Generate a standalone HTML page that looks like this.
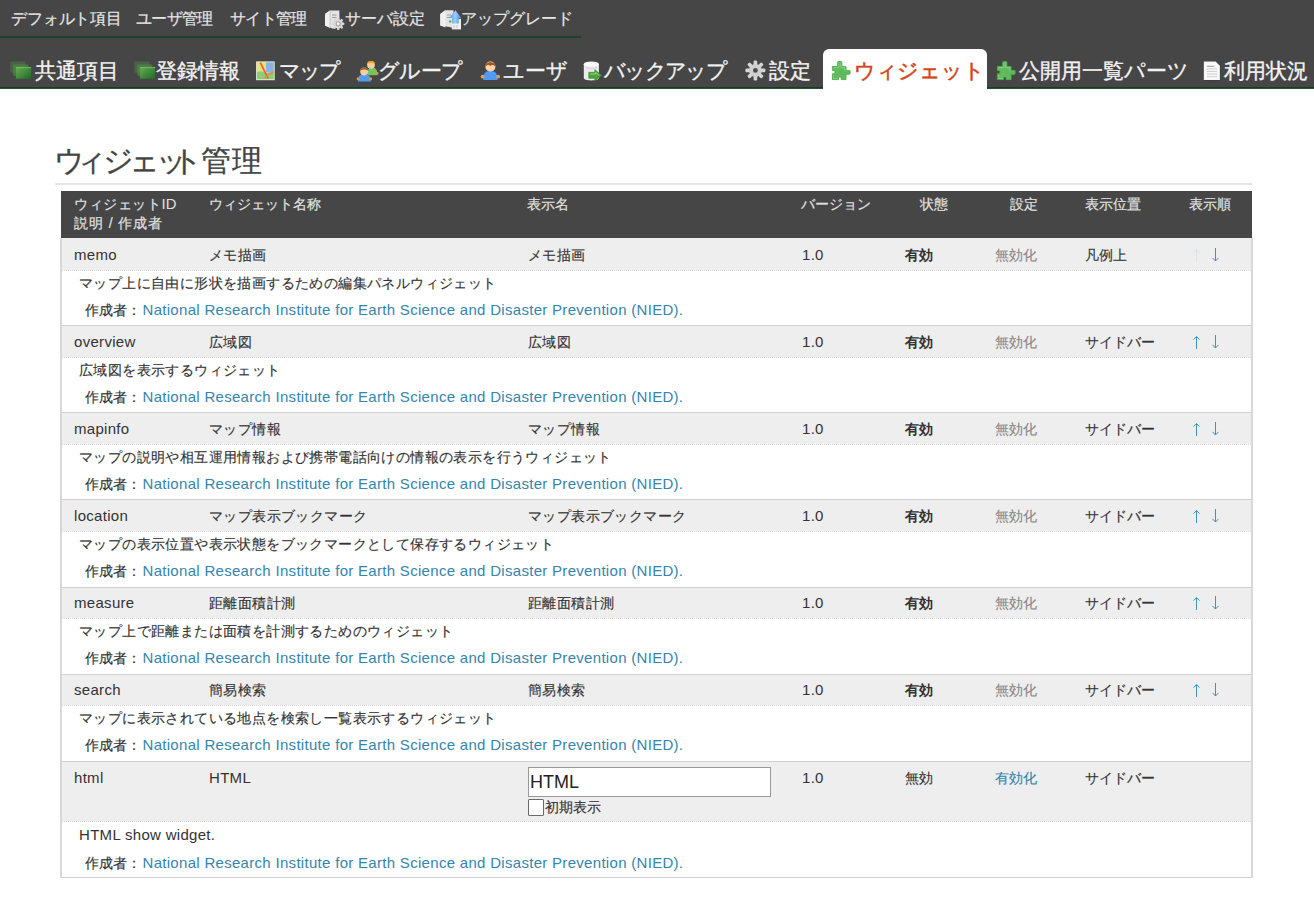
<!DOCTYPE html>
<html><head><meta charset="utf-8"><style>
*{margin:0;padding:0;box-sizing:border-box}
html,body{width:1314px;height:909px;overflow:hidden;background:#fff}
body{position:relative;font-family:"Liberation Sans",sans-serif;color:#333}
.a{position:absolute;white-space:nowrap;line-height:1}
#hdr{position:absolute;left:0;top:0;width:1314px;height:89px;background:#464646}
#hdr .ln1{position:absolute;left:0;top:36px;width:581px;height:2px;background:#1e4232}
#hdr .ln2{position:absolute;left:0;top:87px;width:1314px;height:2px;background:linear-gradient(#15301f,#2c5a3c)}
.nav1{font-size:15.6px;color:#e6e6e6;-webkit-text-stroke:.2px currentColor}
.nav2{font-size:20.8px;color:#f2f2f2;-webkit-text-stroke:.35px currentColor}
.tabact{position:absolute;left:823px;top:49px;width:164px;height:40px;background:#fff;border-radius:6px 6px 0 0}
.ic{position:absolute}
.title{font-size:30px;color:#444;-webkit-text-stroke:.3px currentColor}
.rule{position:absolute;left:55px;top:183px;width:1197px;height:2px;background:#e4e4e4}
.th{position:absolute;left:61px;top:191px;width:1191px;height:47px;background:#464646}
.hd{font-size:14.3px;color:#e0e0e0;-webkit-text-stroke:.2px currentColor}
.gr{position:absolute;left:61px;width:1191px;background:#eee}
.wh{position:absolute;left:61px;width:1191px;background:#fff}
.dot{position:absolute;left:62px;width:1189px;height:1px;border-top:1px dotted #d8d8d8}
.sep{position:absolute;left:61px;width:1191px;height:1px;background:#d0d0d0}
.vb{position:absolute;width:2px;background:#d8d8d8}
.td{font-size:14.3px;color:#333;-webkit-text-stroke:.15px currentColor}
.lk{color:#3585ad}
.dis{color:#888}
.b{font-weight:bold;-webkit-text-stroke:0}
.en{font-size:15px;letter-spacing:.3px;-webkit-text-stroke:0}
.ks{letter-spacing:.4px}
</style></head><body>
<div id="hdr"><div class="ln1"></div><div class="ln2"></div><div class="tabact"></div></div>

<div class="a nav1" style="left:11px;top:11px;letter-spacing:-0.15px">デフォルト項目</div>
<div class="a nav1" style="left:136px;top:11px;letter-spacing:-0.7px">ユーザ管理</div>
<div class="a nav1" style="left:230px;top:11px;letter-spacing:-0.7px">サイト管理</div>
<div class="a nav1" style="left:345px;top:11px;letter-spacing:0px">サーバ設定</div>
<div class="a nav1" style="left:461px;top:11px;letter-spacing:0px">アップグレード</div>
<div class="ic" style="left:320px;top:3px"><svg width="30" height="30" viewBox="0 0 30 30"><path d="M5 11 L10 7.4 H19.4 V24.5 L13 25.7 L5 22.6z" fill="#e4e4e4"/><path d="M5 11 L10 7.4 V25 L5 22.6z" fill="#f0f0f0"/><path d="M10 7.4 V25" stroke="#bdbdbd" stroke-width=".8"/><path d="M12 12 H16.5 M12 14.5 H16.5" stroke="#9e9e9e" stroke-width="1.2"/><rect x="17" y="14.6" width="2.4" height="3.2" rx=".8" fill="#d8d8d8" transform="rotate(0 18.2 20.8)"/><rect x="17" y="14.6" width="2.4" height="3.2" rx=".8" fill="#d8d8d8" transform="rotate(45 18.2 20.8)"/><rect x="17" y="14.6" width="2.4" height="3.2" rx=".8" fill="#d8d8d8" transform="rotate(90 18.2 20.8)"/><rect x="17" y="14.6" width="2.4" height="3.2" rx=".8" fill="#d8d8d8" transform="rotate(135 18.2 20.8)"/><rect x="17" y="14.6" width="2.4" height="3.2" rx=".8" fill="#d8d8d8" transform="rotate(180 18.2 20.8)"/><rect x="17" y="14.6" width="2.4" height="3.2" rx=".8" fill="#d8d8d8" transform="rotate(225 18.2 20.8)"/><rect x="17" y="14.6" width="2.4" height="3.2" rx=".8" fill="#d8d8d8" transform="rotate(270 18.2 20.8)"/><rect x="17" y="14.6" width="2.4" height="3.2" rx=".8" fill="#d8d8d8" transform="rotate(315 18.2 20.8)"/><circle cx="18.2" cy="20.8" r="4.6" fill="#d8d8d8"/><circle cx="18.2" cy="20.8" r="2.6" fill="#a8a8a8"/><circle cx="18.2" cy="20.8" r="1.3" fill="#fff"/></svg></div>
<div class="ic" style="left:435px;top:3px"><svg width="30" height="30" viewBox="0 0 30 30"><defs><linearGradient id="gU" x1="0" y1="0" x2="1" y2="0"><stop offset="0" stop-color="#4a9ae8"/><stop offset=".5" stop-color="#9fcdf8"/><stop offset="1" stop-color="#3a86e0"/></linearGradient></defs><path d="M5.3 11 L10.3 7.3 H18.5 V24.8 L5.3 22.6z" fill="#e4e4e4"/><path d="M5.3 11 L10.3 7.3 V24.5 L5.3 22.6z" fill="#f0f0f0"/><path d="M12 12 H16 M12 14.5 H16" stroke="#9e9e9e" stroke-width="1.2"/><circle cx="15.2" cy="18.5" r="1.2" fill="#50b050"/><rect x="16.8" y="15.8" width="9.2" height="10.6" fill="#eeeeee"/><path d="M19 22 V25 M22 22 V25" stroke="#bbb" stroke-width=".8"/><path d="M20.5 7.3 L26.4 14.9 H23.8 V20.5 H17 V14.9 H14.2z" fill="url(#gU)"/></svg></div>
<div class="ic" style="left:5px;top:55px"><svg width="35" height="30" viewBox="0 0 35 30"><defs><linearGradient id="gF" x1="0" y1="0" x2="1" y2="1"><stop offset="0" stop-color="#68ad58"/><stop offset="1" stop-color="#1f6a22"/></linearGradient></defs><rect x="5.3" y="6.6" width="15.2" height="11.2" rx="1" fill="#4f7a48" opacity=".55"/><rect x="8.1" y="9.4" width="15.3" height="11.4" rx="1" fill="#4c8a44" opacity=".75"/><rect x="10.9" y="12" width="15.2" height="11.8" rx=".8" fill="url(#gF)"/><rect x="10.9" y="12" width="15.2" height="1" fill="#7cc06a" opacity=".7"/></svg></div>
<div class="a nav2" style="left:35px;top:61px;letter-spacing:0px;">共通項目</div>
<div class="ic" style="left:129px;top:55px"><svg width="35" height="30" viewBox="0 0 35 30"><defs><linearGradient id="gF" x1="0" y1="0" x2="1" y2="1"><stop offset="0" stop-color="#68ad58"/><stop offset="1" stop-color="#1f6a22"/></linearGradient></defs><rect x="5.3" y="6.6" width="15.2" height="11.2" rx="1" fill="#4f7a48" opacity=".55"/><rect x="8.1" y="9.4" width="15.3" height="11.4" rx="1" fill="#4c8a44" opacity=".75"/><rect x="10.9" y="12" width="15.2" height="11.8" rx=".8" fill="url(#gF)"/><rect x="10.9" y="12" width="15.2" height="1" fill="#7cc06a" opacity=".7"/></svg></div>
<div class="a nav2" style="left:156px;top:61px;letter-spacing:0px;">登録情報</div>
<div class="ic" style="left:250px;top:55px"><svg width="35" height="30" viewBox="0 0 35 30"><rect x="6.1" y="6.4" width="18.6" height="18.8" fill="#e4eed8"/><rect x="7" y="7.3" width="9.5" height="11" fill="#ece27a"/><rect x="16" y="7.3" width="7.8" height="10" fill="#8cb2e8"/><path d="M7 17 Q12 15 16 18 L23.8 16.5 V24.3 H7z" fill="#8ccf78"/><path d="M10.3 7.6 L18.2 23.6" stroke="#e8603e" stroke-width="1.8"/><path d="M17 20.5 L23.5 17 M17 20.5 L14 23.8" stroke="#ef8a48" stroke-width="1.5"/></svg></div>
<div class="a nav2" style="left:279px;top:61px;letter-spacing:-2px;">マップ</div>
<div class="ic" style="left:352px;top:55px"><svg width="35" height="30" viewBox="0 0 35 30"><path d="M15.5 20.2 C15.5 14 17 12.5 20 12.5 C23 12.5 25.5 14 25.5 20.2z" fill="#74c462"/><circle cx="25.2" cy="18.2" r="1.3" fill="#e39646"/><circle cx="19" cy="9.8" r="3.9" fill="#f6cfa0"/><path d="M15 9.3 C15 5 23 5 23 9.3 C21 7.4 17 7.4 15 9.3z" fill="#eea41e"/><path d="M6 26.4 C6 20.5 8 19.6 12.3 19.6 C16.6 19.6 18.8 20.5 18.8 26.4z" fill="#4e9cf0"/><circle cx="6.1" cy="23.8" r="1.5" fill="#e39646"/><circle cx="18.6" cy="23.8" r="1.5" fill="#e39646"/><circle cx="12.2" cy="16.4" r="4" fill="#f6cfa0"/><path d="M8 16 C7.6 11.2 16.8 11.2 16.4 16 C14.5 14 10 14 8 16z" fill="#9c5a32"/></svg></div>
<div class="a nav2" style="left:378px;top:61px;letter-spacing:-0.7px;">グループ</div>
<div class="ic" style="left:475px;top:55px"><svg width="35" height="30" viewBox="0 0 35 30"><path d="M8.2 25 C8.2 17.5 10.5 15.6 15.4 15.6 C20.3 15.6 22.6 17.5 22.6 25z" fill="#4f9cf2"/><path d="M8.5 20 C9.5 17 11 16 15.4 16 C19.8 16 21.3 17 22.3 20" stroke="#2356b8" stroke-width="1" fill="none"/><circle cx="7.6" cy="21.6" r="1.9" fill="#e8a050"/><circle cx="23.2" cy="21.6" r="1.9" fill="#e8a050"/><circle cx="15.4" cy="11.6" r="5.1" fill="#f8d6aa"/><path d="M10.2 12 C9.5 5.5 21.3 5.5 20.6 12 C19 9.6 16.5 9.4 15.4 11 C14 9.4 12 9.6 10.2 12z" fill="#a4541c"/></svg></div>
<div class="a nav2" style="left:503px;top:61px;letter-spacing:0px;">ユーザ</div>
<div class="ic" style="left:578px;top:55px"><svg width="35" height="30" viewBox="0 0 35 30"><path d="M5.8 9.2 V23 C5.8 24.6 9 25.4 13.35 25.4 C17.7 25.4 20.9 24.6 20.9 23 V9.2z" fill="#ececec"/><ellipse cx="13.35" cy="9.2" rx="7.6" ry="2.6" fill="#fafafa"/><path d="M8 12.5 C10 13.6 17 13.6 19 12.5" stroke="#cfcfcf" stroke-width="1" fill="none"/><path d="M10.8 17.3 H16.8 V14.6 L23.6 20.3 L16.8 25.9 V23.3 H10.8z" fill="#4aa43a" stroke="#2f8a22" stroke-width=".6" stroke-linejoin="round"/><path d="M12 19 H17.5 V17.4 L21.2 20.3" stroke="#9ad08a" stroke-width="1" fill="none"/></svg></div>
<div class="a nav2" style="left:604px;top:61px;letter-spacing:-1.7px;">バックアップ</div>
<div class="ic" style="left:740px;top:55px"><svg width="35" height="30" viewBox="0 0 35 30"><rect x="13.6" y="5.4" width="3.6" height="5" rx="1.2" fill="#d6d6d6" transform="rotate(0 15.4 15.4)"/><rect x="13.6" y="5.4" width="3.6" height="5" rx="1.2" fill="#d6d6d6" transform="rotate(45 15.4 15.4)"/><rect x="13.6" y="5.4" width="3.6" height="5" rx="1.2" fill="#d6d6d6" transform="rotate(90 15.4 15.4)"/><rect x="13.6" y="5.4" width="3.6" height="5" rx="1.2" fill="#d6d6d6" transform="rotate(135 15.4 15.4)"/><rect x="13.6" y="5.4" width="3.6" height="5" rx="1.2" fill="#d6d6d6" transform="rotate(180 15.4 15.4)"/><rect x="13.6" y="5.4" width="3.6" height="5" rx="1.2" fill="#d6d6d6" transform="rotate(225 15.4 15.4)"/><rect x="13.6" y="5.4" width="3.6" height="5" rx="1.2" fill="#d6d6d6" transform="rotate(270 15.4 15.4)"/><rect x="13.6" y="5.4" width="3.6" height="5" rx="1.2" fill="#d6d6d6" transform="rotate(315 15.4 15.4)"/><circle cx="15.4" cy="15.4" r="6.4" fill="#d0d0d0"/><circle cx="15.4" cy="15.4" r="2.4" fill="#4a4a4a"/></svg></div>
<div class="a nav2" style="left:769px;top:61px;letter-spacing:0px;">設定</div>
<div class="ic" style="left:826px;top:55px"><svg width="35" height="30" viewBox="0 0 35 30"><defs><radialGradient id="gP" cx=".5" cy=".6" r=".6"><stop offset="0" stop-color="#5cb95a"/><stop offset=".7" stop-color="#62bd60"/><stop offset="1" stop-color="#49a848"/></radialGradient></defs><path d="M6.4 11.5 H11.7 V7.3 Q11.7 6.6 12.4 6.6 H15.2 Q15.9 6.6 15.9 7.3 V11.5 H20 V15.4 H23.4 Q24.1 15.4 24.1 16.1 V18.6 Q24.1 19.3 23.4 19.3 H20 V24.6 H15.2 V22.1 H12.5 V24.6 H6.4 V18.8 H8.9 V15.5 H6.4 Z" fill="url(#gP)" stroke="#4fae4d" stroke-width=".9" stroke-linejoin="round"/><path d="M7.6 12.6 H12.8 V7.8 H14.8 V12.6 H18.9 V16.4 M7.6 12.6 V14.4 M7.6 19.9 V23.5 H11.4" stroke="#94d48e" stroke-width=".9" fill="none" opacity=".8"/></svg></div>
<div class="a nav2" style="left:854px;top:61px;letter-spacing:-0.3px;color:#d4441a;-webkit-text-stroke:.5px #d4441a">ウィジェット</div>
<div class="ic" style="left:991px;top:55px"><svg width="35" height="30" viewBox="0 0 35 30"><defs><radialGradient id="gP" cx=".5" cy=".6" r=".6"><stop offset="0" stop-color="#5cb95a"/><stop offset=".7" stop-color="#62bd60"/><stop offset="1" stop-color="#49a848"/></radialGradient></defs><path d="M6.4 11.5 H11.7 V7.3 Q11.7 6.6 12.4 6.6 H15.2 Q15.9 6.6 15.9 7.3 V11.5 H20 V15.4 H23.4 Q24.1 15.4 24.1 16.1 V18.6 Q24.1 19.3 23.4 19.3 H20 V24.6 H15.2 V22.1 H12.5 V24.6 H6.4 V18.8 H8.9 V15.5 H6.4 Z" fill="url(#gP)" stroke="#4fae4d" stroke-width=".9" stroke-linejoin="round"/><path d="M7.6 12.6 H12.8 V7.8 H14.8 V12.6 H18.9 V16.4 M7.6 12.6 V14.4 M7.6 19.9 V23.5 H11.4" stroke="#94d48e" stroke-width=".9" fill="none" opacity=".8"/></svg></div>
<div class="a nav2" style="left:1019px;top:61px;letter-spacing:0px;">公開用一覧パーツ</div>
<div class="ic" style="left:1198px;top:55px"><svg width="35" height="30" viewBox="0 0 35 30"><path d="M5.3 5.9 H17.8 L22.4 10.5 V25.6 H5.3z" fill="#2e2e2e" opacity=".6"/><path d="M5.8 6.4 H17.6 L21.9 10.8 V25.1 H5.8z" fill="#f8f8f8"/><path d="M9 11.3 H16.2" stroke="#9a9a9a" stroke-width="1"/><path d="M9 13.9 H19 M9 16.5 H19 M9 19.1 H19 M9 21.7 H19" stroke="#cfcfcf" stroke-width="1"/></svg></div>
<div class="a nav2" style="left:1224px;top:61px;letter-spacing:0px;">利用状況</div>
<div class="a title" style="left:54px;top:146px">ウ</div>
<div class="a title" style="left:76px;top:146px">ィ</div>
<div class="a title" style="left:103px;top:146px">ジ</div>
<div class="a title" style="left:129px;top:146px">ェ</div>
<div class="a title" style="left:156px;top:146px">ッ</div>
<div class="a title" style="left:172px;top:146px">ト</div>
<div class="a title" style="left:201px;top:146px">管</div>
<div class="a title" style="left:232px;top:146px">理</div>
<div class="rule"></div><div class="th"></div>
<div class="a hd" style="left:74px;top:197px"><span style='letter-spacing:.6px'>ウィジェット</span><span class=en style='font-size:14.8px;letter-spacing:0'>ID</span></div>
<div class="a hd" style="left:209px;top:197px">ウィジェット名称</div>
<div class="a hd" style="left:527px;top:197px">表示名</div>
<div class="a hd" style="left:801px;top:197px">バージョン</div>
<div class="a hd" style="left:920px;top:197px">状態</div>
<div class="a hd" style="left:1010px;top:197px">設定</div>
<div class="a hd" style="left:1085px;top:197px">表示位置</div>
<div class="a hd" style="left:1189px;top:197px">表示順</div>
<div class="a hd" style="left:74px;top:216px;letter-spacing:.9px">説明 / 作成者</div>
<div class="gr" style="top:238px;height:32px"></div>
<div class="dot" style="top:270px"></div>
<div class="a td en" style="left:74px;top:247px">memo</div>
<div class="a td ks" style="left:209px;top:248px">メモ描画</div>
<div class="a td ks" style="left:528px;top:248px">メモ描画</div>
<div class="a td en" style="left:802px;top:247px">1.0</div>
<div class="a td b" style="left:905px;top:248px">有効</div>
<div class="a td dis" style="left:995px;top:248px">無効化</div>
<div class="a td" style="left:1085px;top:248px">凡例上</div>
<svg class="ic" style="left:1192px;top:248px" width="9" height="15" viewBox="0 0 9 15"><path d="M4.5 1.5V14M1.5 4.6l3-3.1 3 3.1" stroke="#dde3e6" stroke-width="1" fill="none"/></svg>
<svg class="ic" style="left:1211px;top:248px" width="9" height="15" viewBox="0 0 9 15"><path d="M4.5 0V13M1.5 9.9l3 3.1 3-3.1" stroke="#4590bb" stroke-width="1" fill="none"/></svg>
<div class="a td ks" style="left:79px;top:276px">マップ上に自由に形状を描画するための編集パネルウィジェット</div>
<div class="a td" style="left:85px;top:302px">作成者：<span class="lk en" style="margin-left:1.5px">National Research Institute for Earth Science and Disaster Prevention (NIED).</span></div>
<div class="sep" style="top:325px;height:1px"></div>
<div class="gr" style="top:326px;height:31px"></div>
<div class="dot" style="top:357px"></div>
<div class="a td en" style="left:74px;top:334px">overview</div>
<div class="a td ks" style="left:209px;top:335px">広域図</div>
<div class="a td ks" style="left:528px;top:335px">広域図</div>
<div class="a td en" style="left:802px;top:334px">1.0</div>
<div class="a td b" style="left:905px;top:335px">有効</div>
<div class="a td dis" style="left:995px;top:335px">無効化</div>
<div class="a td" style="left:1085px;top:335px">サイドバー</div>
<svg class="ic" style="left:1192px;top:335px" width="9" height="15" viewBox="0 0 9 15"><path d="M4.5 1.5V14M1.5 4.6l3-3.1 3 3.1" stroke="#4590bb" stroke-width="1" fill="none"/></svg>
<svg class="ic" style="left:1211px;top:335px" width="9" height="15" viewBox="0 0 9 15"><path d="M4.5 0V13M1.5 9.9l3 3.1 3-3.1" stroke="#4590bb" stroke-width="1" fill="none"/></svg>
<div class="a td ks" style="left:79px;top:363px">広域図を表示するウィジェット</div>
<div class="a td" style="left:85px;top:389px">作成者：<span class="lk en" style="margin-left:1.5px">National Research Institute for Earth Science and Disaster Prevention (NIED).</span></div>
<div class="sep" style="top:412px;height:1px"></div>
<div class="gr" style="top:413px;height:31px"></div>
<div class="dot" style="top:444px"></div>
<div class="a td en" style="left:74px;top:421px">mapinfo</div>
<div class="a td ks" style="left:209px;top:422px">マップ情報</div>
<div class="a td ks" style="left:528px;top:422px">マップ情報</div>
<div class="a td en" style="left:802px;top:421px">1.0</div>
<div class="a td b" style="left:905px;top:422px">有効</div>
<div class="a td dis" style="left:995px;top:422px">無効化</div>
<div class="a td" style="left:1085px;top:422px">サイドバー</div>
<svg class="ic" style="left:1192px;top:422px" width="9" height="15" viewBox="0 0 9 15"><path d="M4.5 1.5V14M1.5 4.6l3-3.1 3 3.1" stroke="#4590bb" stroke-width="1" fill="none"/></svg>
<svg class="ic" style="left:1211px;top:422px" width="9" height="15" viewBox="0 0 9 15"><path d="M4.5 0V13M1.5 9.9l3 3.1 3-3.1" stroke="#4590bb" stroke-width="1" fill="none"/></svg>
<div class="a td ks" style="left:79px;top:450px">マップの説明や相互運用情報および携帯電話向けの情報の表示を行うウィジェット</div>
<div class="a td" style="left:85px;top:476px">作成者：<span class="lk en" style="margin-left:1.5px">National Research Institute for Earth Science and Disaster Prevention (NIED).</span></div>
<div class="sep" style="top:499px;height:1px"></div>
<div class="gr" style="top:500px;height:31px"></div>
<div class="dot" style="top:531px"></div>
<div class="a td en" style="left:74px;top:508px">location</div>
<div class="a td ks" style="left:209px;top:509px">マップ表示ブックマーク</div>
<div class="a td ks" style="left:528px;top:509px">マップ表示ブックマーク</div>
<div class="a td en" style="left:802px;top:508px">1.0</div>
<div class="a td b" style="left:905px;top:509px">有効</div>
<div class="a td dis" style="left:995px;top:509px">無効化</div>
<div class="a td" style="left:1085px;top:509px">サイドバー</div>
<svg class="ic" style="left:1192px;top:509px" width="9" height="15" viewBox="0 0 9 15"><path d="M4.5 1.5V14M1.5 4.6l3-3.1 3 3.1" stroke="#4590bb" stroke-width="1" fill="none"/></svg>
<svg class="ic" style="left:1211px;top:509px" width="9" height="15" viewBox="0 0 9 15"><path d="M4.5 0V13M1.5 9.9l3 3.1 3-3.1" stroke="#4590bb" stroke-width="1" fill="none"/></svg>
<div class="a td ks" style="left:79px;top:537px">マップの表示位置や表示状態をブックマークとして保存するウィジェット</div>
<div class="a td" style="left:85px;top:563px">作成者：<span class="lk en" style="margin-left:1.5px">National Research Institute for Earth Science and Disaster Prevention (NIED).</span></div>
<div class="sep" style="top:587px;height:1px"></div>
<div class="gr" style="top:588px;height:30px"></div>
<div class="dot" style="top:618px"></div>
<div class="a td en" style="left:74px;top:595px">measure</div>
<div class="a td ks" style="left:209px;top:596px">距離面積計測</div>
<div class="a td ks" style="left:528px;top:596px">距離面積計測</div>
<div class="a td en" style="left:802px;top:595px">1.0</div>
<div class="a td b" style="left:905px;top:596px">有効</div>
<div class="a td dis" style="left:995px;top:596px">無効化</div>
<div class="a td" style="left:1085px;top:596px">サイドバー</div>
<svg class="ic" style="left:1192px;top:596px" width="9" height="15" viewBox="0 0 9 15"><path d="M4.5 1.5V14M1.5 4.6l3-3.1 3 3.1" stroke="#4590bb" stroke-width="1" fill="none"/></svg>
<svg class="ic" style="left:1211px;top:596px" width="9" height="15" viewBox="0 0 9 15"><path d="M4.5 0V13M1.5 9.9l3 3.1 3-3.1" stroke="#4590bb" stroke-width="1" fill="none"/></svg>
<div class="a td ks" style="left:79px;top:624px">マップ上で距離または面積を計測するためのウィジェット</div>
<div class="a td" style="left:85px;top:650px">作成者：<span class="lk en" style="margin-left:1.5px">National Research Institute for Earth Science and Disaster Prevention (NIED).</span></div>
<div class="sep" style="top:674px;height:1px"></div>
<div class="gr" style="top:675px;height:30px"></div>
<div class="dot" style="top:705px"></div>
<div class="a td en" style="left:74px;top:682px">search</div>
<div class="a td ks" style="left:209px;top:683px">簡易検索</div>
<div class="a td ks" style="left:528px;top:683px">簡易検索</div>
<div class="a td en" style="left:802px;top:682px">1.0</div>
<div class="a td b" style="left:905px;top:683px">有効</div>
<div class="a td dis" style="left:995px;top:683px">無効化</div>
<div class="a td" style="left:1085px;top:683px">サイドバー</div>
<svg class="ic" style="left:1192px;top:683px" width="9" height="15" viewBox="0 0 9 15"><path d="M4.5 1.5V14M1.5 4.6l3-3.1 3 3.1" stroke="#4590bb" stroke-width="1" fill="none"/></svg>
<svg class="ic" style="left:1211px;top:683px" width="9" height="15" viewBox="0 0 9 15"><path d="M4.5 0V13M1.5 9.9l3 3.1 3-3.1" stroke="#4590bb" stroke-width="1" fill="none"/></svg>
<div class="a td ks" style="left:79px;top:711px">マップに表示されている地点を検索し一覧表示するウィジェット</div>
<div class="a td" style="left:85px;top:737px">作成者：<span class="lk en" style="margin-left:1.5px">National Research Institute for Earth Science and Disaster Prevention (NIED).</span></div>
<div class="sep" style="top:761px;height:1px"></div>
<div class="gr" style="top:762px;height:59px"></div>
<div class="dot" style="top:821px"></div>
<div class="a td en" style="left:74px;top:770px">html</div>
<div class="a td en" style="left:209px;top:770px">HTML</div>
<div style="position:absolute;left:528px;top:767px;width:243px;height:30px;border:1px solid #999;background:#fff;font-size:18px;line-height:28px;padding-left:1px;color:#222">HTML</div>
<div style="position:absolute;left:528px;top:799px;width:16px;height:17px;border:1px solid #6a6a6a;border-radius:1px;background:#fff"></div>
<div class="a td" style="left:545px;top:800px">初期表示</div>
<div class="a td en" style="left:802px;top:770px">1.0</div>
<div class="a td" style="left:905px;top:771px">無効</div>
<div class="a td lk" style="left:995px;top:771px">有効化</div>
<div class="a td" style="left:1085px;top:771px">サイドバー</div>
<div class="a td en" style="left:79px;top:827px">HTML show widget.</div>
<div class="a td" style="left:85px;top:855px">作成者：<span class="lk en" style="margin-left:1.5px">National Research Institute for Earth Science and Disaster Prevention (NIED).</span></div>
<div class="sep" style="top:877px;height:1px"></div>
<div class="vb" style="left:60px;top:238px;height:640px"></div>
<div class="vb" style="left:1251px;top:238px;height:640px"></div>
</body></html>
